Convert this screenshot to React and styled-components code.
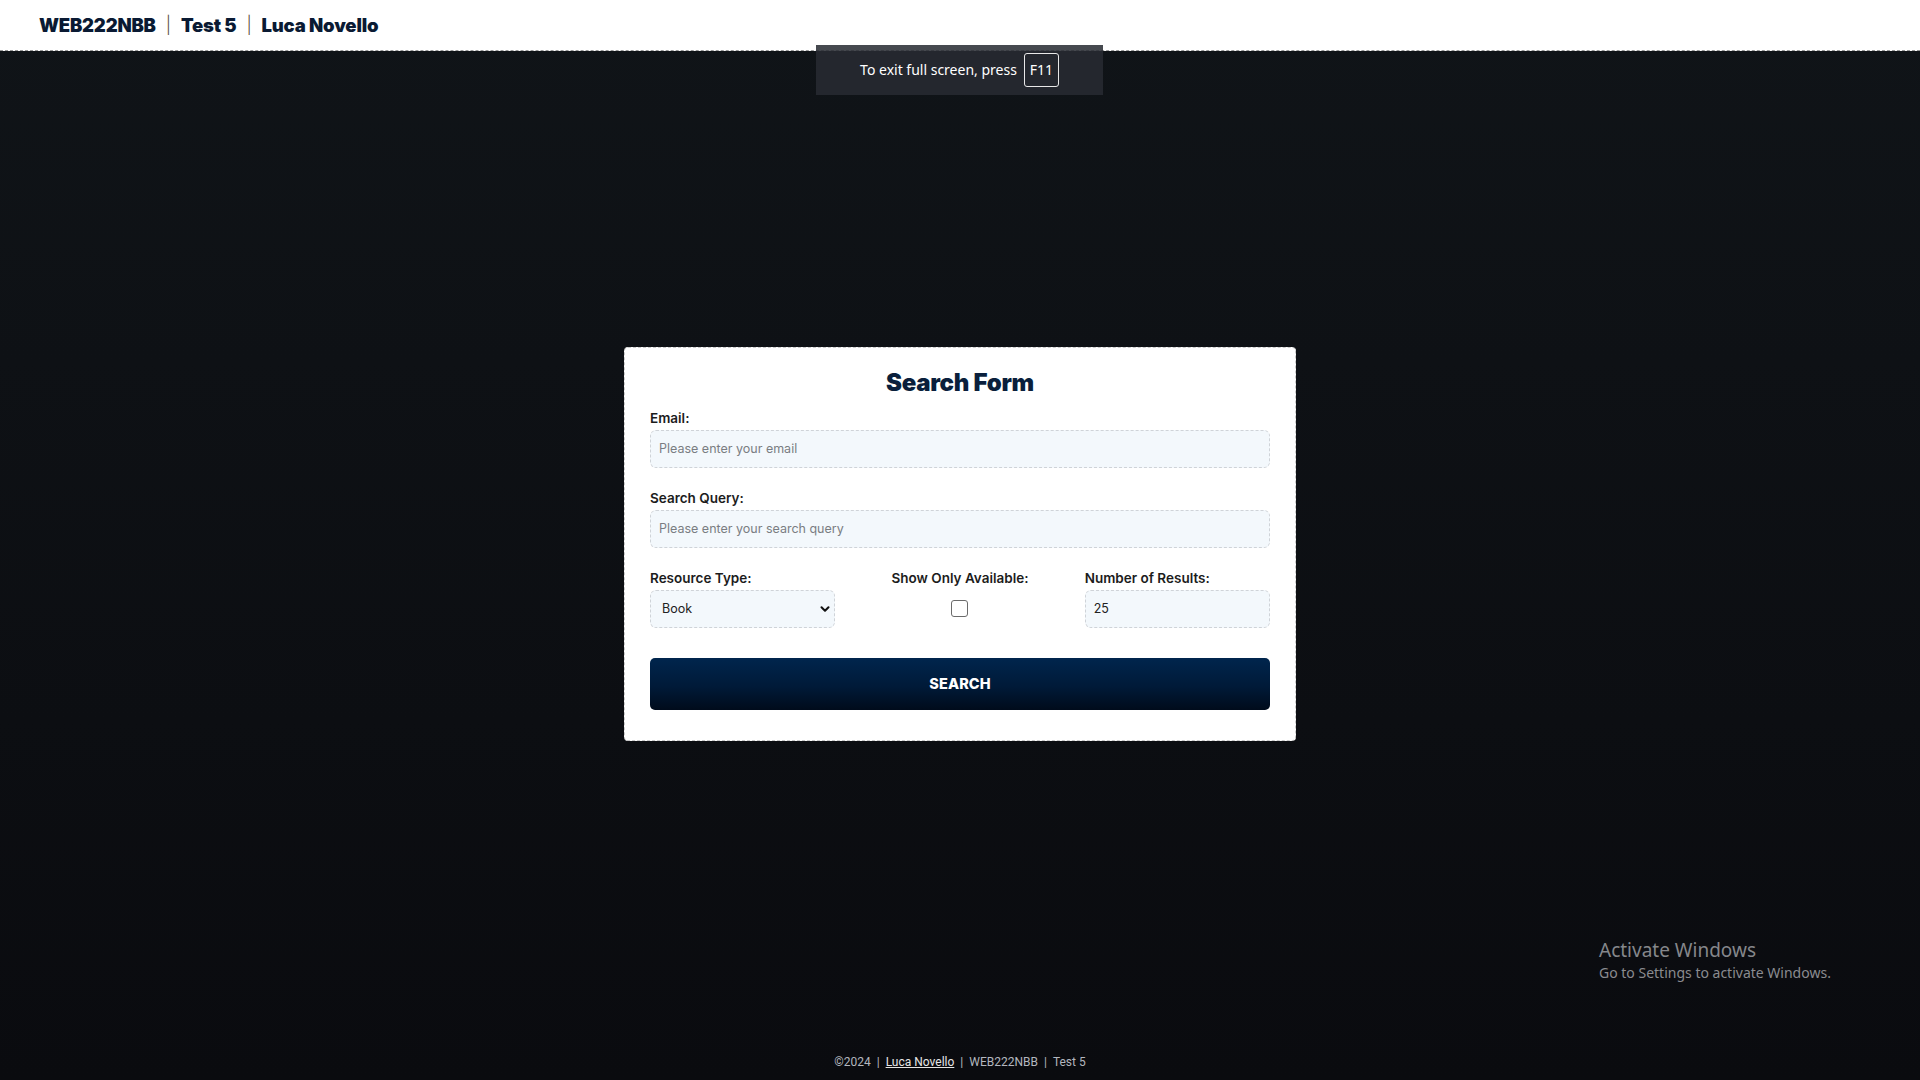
import React from 'react';
import styled, { createGlobalStyle } from 'styled-components';
import { ChevronDown } from 'lucide-react';

const GlobalStyle = createGlobalStyle`
  html, body {
    margin: 0;
    padding: 0;
  }
  body {
    font-family: Inter, "Noto Sans", sans-serif;
    background: linear-gradient(180deg, #101418 0%, #0a0b0f 100%);
    min-height: 100vh;
  }
  * {
    box-sizing: border-box;
  }
`;

// Page frame
const Page = styled.div`
  position: relative;
  min-height: 100vh;
  display: flex;
  flex-direction: column;
`;

// Top bar
const Header = styled.header`
  height: 51px;
  background-color: #ffffff;
  border-bottom: 1px dashed #9a9a9a;
  display: flex;
  align-items: center;
  padding: 0 39px;
  gap: 10px;
  font-family: Inter, sans-serif;
  font-size: 18.5px;
  font-weight: 900;
  color: #0a1a33;
  letter-spacing: -0.2px;
`;

const Separator = styled.span`
  font-weight: 300;
  color: #5a4a3a;
  font-size: 17px;
`;

// Main area
const Main = styled.main`
  flex: 1;
  display: flex;
  align-items: center;
  justify-content: center;
  padding-bottom: 8px;
`;

// Form card
const Card = styled.form`
  width: 672px;
  background-color: #ffffff;
  border: 1px dashed #c9c9c9;
  border-radius: 4px;
  padding: 17px 25px 30px;
`;

const Title = styled.h1`
  margin: 0;
  text-align: center;
  font-size: 24px;
  line-height: 36px;
  font-weight: 900;
  color: #0a1f3c;
  letter-spacing: -0.3px;
`;

const Field = styled.div`
  margin-top: ${({ first }) => (first ? '7px' : '20px')};
  display: flex;
  flex-direction: column;
  align-items: ${({ center }) => (center ? 'center' : 'stretch')};
`;

const Label = styled.label`
  display: block;
  font-size: 13.5px;
  line-height: 21px;
  font-weight: 600;
  color: #1c1c1c;
  margin-bottom: 1px;
`;

const Input = styled.input`
  width: 100%;
  height: 38px;
  background-color: #f3f8fc;
  border: 1px dashed #cfd3d8;
  border-radius: 6px;
  padding: 0 8px;
  font-family: Inter, sans-serif;
  font-size: 12.5px;
  color: #222;
  outline: none;
  appearance: textfield;

  &::placeholder {
    color: #7a7d82;
  }

  &::-webkit-outer-spin-button,
  &::-webkit-inner-spin-button {
    -webkit-appearance: none;
    margin: 0;
  }
`;

const Row = styled.div`
  display: grid;
  grid-template-columns: repeat(3, 1fr);
  gap: 32px;
`;

const SelectWrap = styled.div`
  position: relative;
`;

const Select = styled.select`
  width: 100%;
  height: 38px;
  background-color: #f3f8fc;
  border: 1px dashed #cfd3d8;
  border-radius: 6px;
  padding: 0 11px;
  font-family: Inter, sans-serif;
  font-size: 12.5px;
  color: #222;
  appearance: none;
  outline: none;
`;

const Arrow = styled.span`
  position: absolute;
  right: 3px;
  top: 50%;
  transform: translateY(-50%);
  display: flex;
  pointer-events: none;
  color: #111;
`;

const Checkbox = styled.input`
  margin: 10px 0 0;
  width: 17px;
  height: 17px;
  appearance: none;
  border: 1.5px solid #6b6b6b;
  border-radius: 3px;
  background: #fff;
`;

const Button = styled.button`
  margin-top: 30px;
  width: 100%;
  height: 52px;
  border: none;
  border-radius: 5px;
  background: linear-gradient(180deg, #00254d 0%, #001a38 55%, #000b1b 100%);
  color: #ffffff;
  font-family: Inter, sans-serif;
  font-size: 14.5px;
  font-weight: 800;
  letter-spacing: 0.1px;
  cursor: pointer;
`;

// Footer
const Footer = styled.footer`
  height: 36px;
  display: flex;
  align-items: center;
  justify-content: center;
  gap: 6px;
  font-family: Roboto, sans-serif;
  font-size: 12px;
  color: #b3b7bf;
`;

const FooterLink = styled.a`
  color: #e6e6e6;
  text-decoration: underline;
`;

// Browser fullscreen toast (overlay)
const Toast = styled.div`
  position: absolute;
  top: 45px;
  left: 816px;
  width: 287px;
  height: 50px;
  background-color: rgba(40, 43, 50, 0.86);
  display: flex;
  align-items: center;
  justify-content: center;
  gap: 7px;
  padding-bottom: 1px;
  font-family: "Noto Sans", "Open Sans", sans-serif;
  font-size: 14px;
  color: #ffffff;
`;

const Key = styled.span`
  display: inline-flex;
  align-items: center;
  justify-content: center;
  width: 35px;
  height: 34px;
  border: 1px solid #e8e8e8;
  border-radius: 3px;
`;

// Windows watermark (overlay)
const Watermark = styled.div`
  position: absolute;
  left: 1599px;
  top: 937px;
  font-family: "Noto Sans", "Open Sans", sans-serif;
  color: #85878b;
`;

const WatermarkTitle = styled.div`
  font-size: 19px;
  line-height: 26px;
`;

const WatermarkText = styled.div`
  font-size: 14px;
  line-height: 20px;
  color: #8a8b8f;
`;

const App = () => {
  return (
    <>
      <GlobalStyle />
      <Page>
        <Header>
          <span>WEB222NBB</span>
          <Separator>|</Separator>
          <span>Test 5</span>
          <Separator>|</Separator>
          <span>Luca Novello</span>
        </Header>

        <Main>
          <Card onSubmit={e => e.preventDefault()}>
            <Title>Search Form</Title>

            <Field first>
              <Label htmlFor="email">Email:</Label>
              <Input id="email" type="email" placeholder="Please enter your email" />
            </Field>

            <Field>
              <Label htmlFor="query">Search Query:</Label>
              <Input id="query" type="text" placeholder="Please enter your search query" />
            </Field>

            <Row>
              <Field>
                <Label htmlFor="type">Resource Type:</Label>
                <SelectWrap>
                  <Select id="type" defaultValue="book">
                    <option value="book">Book</option>
                    <option value="journal">Journal</option>
                    <option value="video">Video</option>
                  </Select>
                  <Arrow>
                    <ChevronDown size={14} strokeWidth={3.5} />
                  </Arrow>
                </SelectWrap>
              </Field>

              <Field center>
                <Label htmlFor="available">Show Only Available:</Label>
                <Checkbox id="available" type="checkbox" />
              </Field>

              <Field>
                <Label htmlFor="results">Number of Results:</Label>
                <Input id="results" type="number" defaultValue={25} />
              </Field>
            </Row>

            <Button type="submit">SEARCH</Button>
          </Card>
        </Main>

        <Footer>
          <span>©2024</span>
          <span>|</span>
          <FooterLink href="#">Luca Novello</FooterLink>
          <span>|</span>
          <span>WEB222NBB</span>
          <span>|</span>
          <span>Test 5</span>
        </Footer>

        <Toast>
          <span>To exit full screen, press</span>
          <Key>F11</Key>
        </Toast>

        <Watermark>
          <WatermarkTitle>Activate Windows</WatermarkTitle>
          <WatermarkText>Go to Settings to activate Windows.</WatermarkText>
        </Watermark>
      </Page>
    </>
  );
};

export default App;
